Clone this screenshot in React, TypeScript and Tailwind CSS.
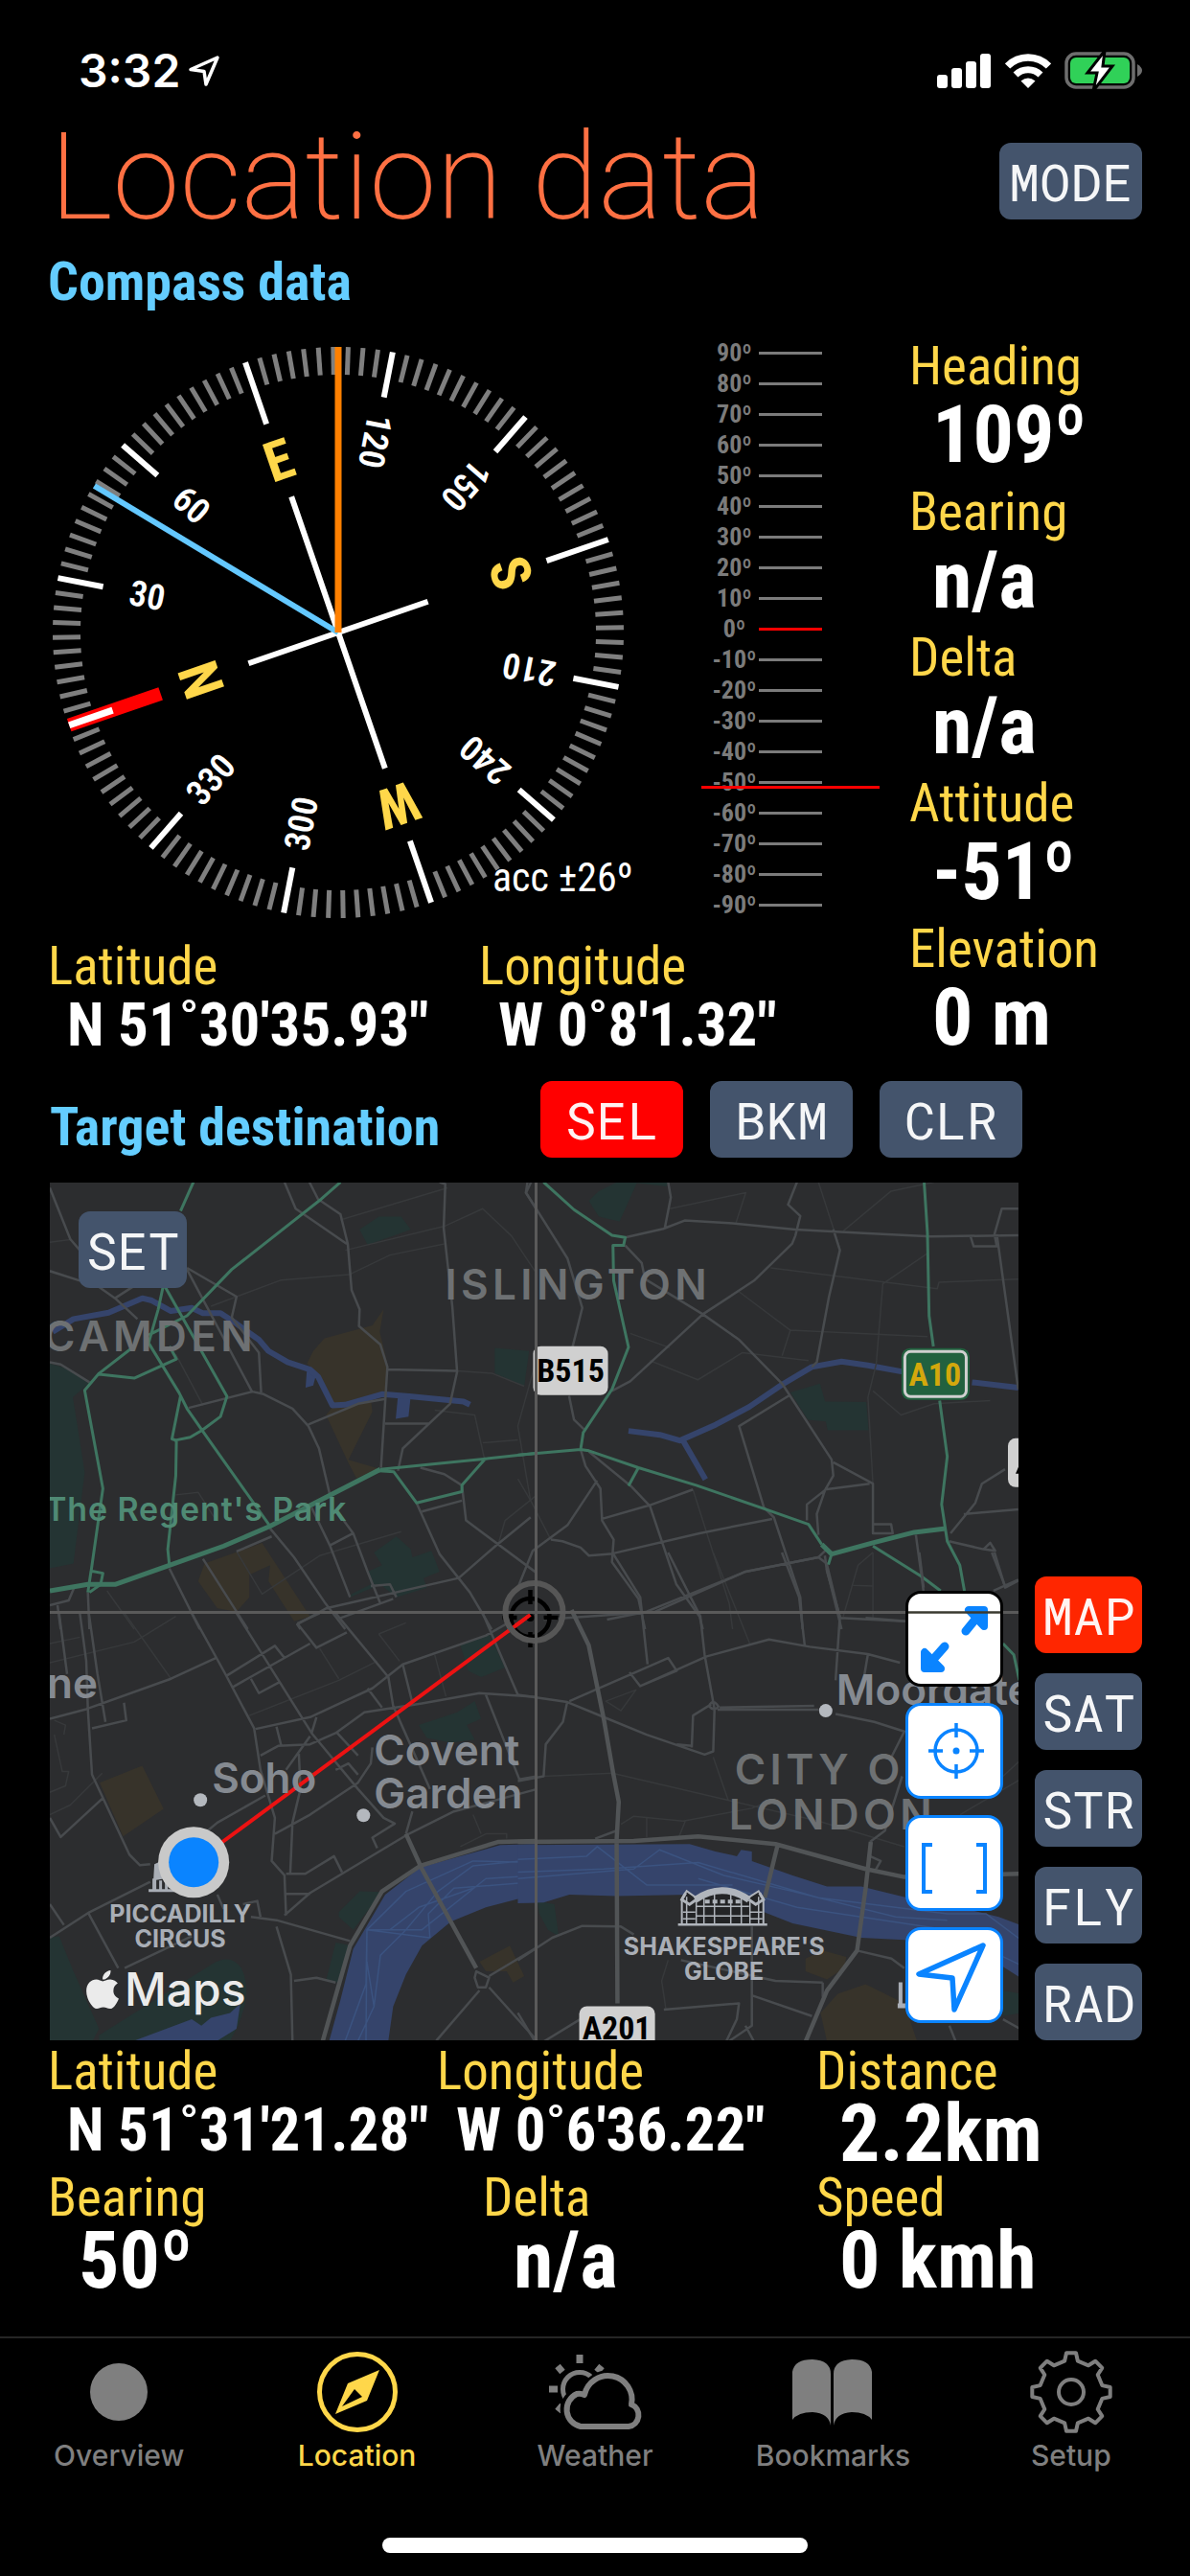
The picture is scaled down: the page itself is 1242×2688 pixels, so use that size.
import React from "react";
import { FaApple } from "react-icons/fa";

const COND = "font-['Roboto_Condensed',Roboto,'Liberation_Sans',sans-serif]";

/* ---------- status bar ---------- */

function StatusBar() {
  return (
    <div className="mt-[50px] flex h-12 items-center justify-between pl-[82px] pr-[50px]">
      <div className="flex items-center gap-2">
        <span className="text-[48px] leading-[48px] font-semibold">3:32</span>
        <svg width="34" height="34" viewBox="0 0 34 34" fill="none" stroke="white" strokeWidth="3.5" strokeLinejoin="round" aria-hidden="true">
          <path d="M31 3L3 15.500L17 17.500L19 31Z" />
        </svg>
      </div>
      <div className="flex items-center gap-[14px]">
        <svg width="57" height="36" viewBox="0 0 57 36" fill="white" role="img" aria-label="Signal">
          <rect x="0" y="22" width="11" height="14" rx="3" />
          <rect x="15" y="15" width="11" height="21" rx="3" />
          <rect x="30" y="8" width="11" height="28" rx="3" />
          <rect x="45" y="0" width="11" height="36" rx="3" />
        </svg>
        <svg width="48" height="36" viewBox="0 0 48 36" fill="none" stroke="white" role="img" aria-label="Wi-Fi">
          <path d="M2.500 13A30 30 0 0 1 45.500 13" strokeWidth="7.500" />
          <path d="M11 22A18.500 18.500 0 0 1 37 22" strokeWidth="7" />
          <path d="M24 36L16.500 28.500Q24 22.500 31.500 28.500Z" fill="white" stroke="none" />
        </svg>
        <svg width="81" height="40" viewBox="0 0 81 40" role="img" aria-label="Battery charging">
          <rect x="2" y="2" width="70" height="35" rx="10" fill="none" stroke="#6e6e6e" strokeWidth="3.500" />
          <path d="M76 13Q81 16 81 19.500Q81 23 76 26Z" fill="#6e6e6e" />
          <rect x="6" y="6" width="62" height="27" rx="6" fill="#30d158" />
          <path d="M42 -1L24 22H34L30 41L50 15H40Z" fill="white" stroke="black" strokeWidth="3" />
        </svg>
      </div>
    </div>
  );
}

/* ---------- shared pieces ---------- */

function PadButton({ label, tone = "slate", className = "" }: { label: string; tone?: "slate" | "red" | "orange"; className?: string }) {
  const bg = tone === "red" ? "bg-[#ff0000]" : tone === "orange" ? "bg-[#ff2600]" : "bg-[#44546c]";
  return (
    <button type="button" className={`h-20 shrink-0 rounded-xl font-['Roboto_Mono','Liberation_Mono',monospace] text-[54px] leading-[80px] text-white/95 ${bg} ${className}`}>
      {label}
    </button>
  );
}

function Label({ children }: { children: React.ReactNode }) {
  return <div className={`text-[55px] leading-[60px] whitespace-nowrap text-[#ffd74a] ${COND}`}>{children}</div>;
}

function Coord({ children }: { children: React.ReactNode }) {
  return <div className={`pl-5 text-[63px] leading-[64px] font-bold whitespace-nowrap ${COND}`}>{children}</div>;
}

function Value({ children, className = "pl-6 leading-[72px]" }: { children: React.ReactNode; className?: string }) {
  return <div className={`text-[84px] font-bold whitespace-nowrap ${COND} ${className}`}>{children}</div>;
}

/* ---------- compass ---------- */

const HEADING = 109;
const CARDINALS: Record<number, string> = { 0: "N", 90: "E", 180: "S", 270: "W" };

function Compass() {
  const marks = Array.from({ length: 120 }, (_, i) => i * 3);
  return (
    <svg viewBox="0 0 624 616" className="h-[616px] w-[624px]" role="img" aria-label="Compass, heading 109 degrees">
      <g transform="translate(303 308)">
        <g transform={`rotate(${-HEADING})`}>
          {marks.map((a) => {
            const cardinal = a % 90 === 0;
            const major = a % 30 === 0;
            if (a === 0) return null;
            return (
              <line key={a} y1={-298} y2={cardinal ? -230 : major ? -250 : -269} stroke={major ? "white" : "#7f7f7f"} strokeWidth={major ? 6 : 5} transform={`rotate(${a})`} />
            );
          })}
          <rect x="-7" y="-297" width="14" height="101" fill="#ff0000" />
          <rect x="-3.500" y="-297" width="7" height="48" fill="white" />
          <path d="M0 -99V99M-150 0H150" stroke="white" strokeWidth="6" />
          {marks.filter((a) => a % 30 === 0).map((a) =>
            CARDINALS[a] ? (
              <text key={a} transform={`rotate(${a}) translate(0 ${a === 0 ? -131 : -170})`} textAnchor="middle" className={`fill-[#ffd74a] text-[58px] font-bold ${COND}`}>
                {CARDINALS[a]}
              </text>
            ) : (
              <text key={a} transform={`rotate(${a}) translate(0 -203) rotate(90)`} y="13" textAnchor="middle" className={`fill-white text-[37px] font-semibold ${COND}`}>
                {a}
              </text>
            ),
          )}
        </g>
        <line y2="-297" stroke="#64c8ff" strokeWidth="6" transform="rotate(-59)" />
        <line y2="-298" stroke="#ff8000" strokeWidth="7" />
      </g>
      <text x="464" y="578" className={`fill-white text-[42px] ${COND}`}>acc ±26º</text>
    </svg>
  );
}

function AttitudeScale() {
  const steps = Array.from({ length: 19 }, (_, i) => 90 - i * 10);
  return (
    <div className="relative flex flex-col">
      {steps.map((s) => (
        <div key={s} className="flex h-8 items-center">
          <span className={`w-[60px] pl-[9px] text-center text-[26px] leading-8 font-bold text-[#7b7b7b] ${COND}`}>{s}º</span>
          <span className={`h-[3px] w-[66px] ${s === 0 ? "bg-[#ff0000]" : "bg-[#7b7b7b]"}`} />
        </div>
      ))}
      <span className="absolute top-[468px] left-0 h-[3px] w-[186px] bg-[#ff0000]" />
    </div>
  );
}

const READOUTS = [
  ["Heading", "109º"],
  ["Bearing", "n/a"],
  ["Delta", "n/a"],
  ["Attitude", "-51º"],
  ["Elevation", "0 m"],
];

/* ---------- map ---------- */

type Tile = { at: string; parks: string; sand: string; water?: string; canal?: string; wakes?: string; faint: string; roads: string; banks?: string; green?: string; trunk?: string };

const TILES: Tile[] = [
  {
    at: "translate(40 1220) scale(.33333)",
    parks: "M36 610L75 620L165 665L108 715L125 820L145 950L110 1235L36 1250ZM1005 190L1065 150L1135 150L1165 190L1030 238ZM1428 560L1535 570L1520 680L1428 640ZM1120 1150L1165 1190L1170 1215L1230 1195L1255 1260L1205 1280L1215 1310L1120 1340L1070 1300L975 1340L980 1330L1040 1300L1030 1260L1075 1240L1050 1200Z",
    sand: "M840 610L860 570L895 530L1045 490L1080 440L1068 510L1092 610L1085 700L1040 720L1045 760L970 910L1065 938L995 968L970 920L900 770L925 740L875 640ZM500 1290L520 1235L700 1170L850 1400L800 1415L720 1290L725 1240L660 1270L660 1340L620 1385L560 1375Z",
    canal: "M45 510L110 470L220 450L325 405L355 412L415 445L480 435L515 452L570 452L620 485L690 535L720 570L780 605L850 628L875 650L920 740L960 738L1075 705L1160 712L1330 728L1350 738",
    water: "M1125 710L1165 710L1158 775L1118 782ZM840 630L870 640L860 678L836 685Z",
    faint: "M945 160L1280 60M960 255L1270 180L1390 125L1480 210L1560 330M975 330L1100 270L1270 235M540 430L760 348L980 330M430 580L515 740M1310 632L1420 640L1520 680M1240 755L1365 770L1395 905M1560 590L1500 805L1540 1040M1135 1135L880 1210L700 1330L620 1197M215 1320L300 1440M430 1020L500 1012L550 1090M36 230L100 222M1390 857L1500 848M1440 1170L1460 1100L1560 1020",
    roads: "M36 60L100 220L130 255M36 320L130 350M190 370L240 405L310 470M240 405L310 360M465 310L620 400L605 465L690 575L697 700M465 315L670 700M470 748L670 697L705 705L795 750L845 805L878 875L912 1020M855 1060L912 1178L975 1340M845 800L1000 735L1085 720M770 42L805 125L965 235M848 42L875 95L945 142L968 235L980 380L1005 440L1003 492L1070 550L1092 620L1072 935M1092 628L1310 632M1255 42L1273 48L1268 185L1295 430L1310 635L1288 735L1140 875L1125 945M1085 797L1225 797M1195 935L1270 955L1325 990L1338 1100L1560 1265M1183 1045L1255 1205L1350 1325L1418 1440M1200 1072L1325 1038M410 1250L505 1440M515 1220L655 1440M725 1125L800 1215L895 1355L960 1440M955 1100L985 1140L1030 1260L1070 1360M912 1178L985 1140M620 1197L730 1150M820 1440L810 1425L900 1375L1315 1280L1430 1180L1540 1090M945 1405L1110 1345M1040 1305L1100 1300L1120 1340M36 605L70 612L160 668M155 1325L160 1440M60 1365L70 1440M36 1365L95 1350L112 1310M1530 42L1525 75L1560 130",
    green: "M485 42L445 132M945 42L885 95L605 315L465 460L345 520M390 370L375 440L345 545L440 700L465 750L510 815L725 1118M397 370L590 712L570 775L512 818L475 840L425 850M300 555L190 640L145 693L202 1000L165 1260M190 643L300 655L432 595L410 555M445 710L418 845L432 850L430 960L405 1190L410 1240M1065 945L1112 948L1183 1045L1325 1010L1325 990L1400 905M155 1325L165 1258L202 1265L195 1300L160 1325M1070 940L1400 907L1556 890",
    trunk: "M36 1320L155 1300L240 1300L410 1240L580 1180L725 1118L905 1025L1070 940",
  },
  {
    at: "translate(540 1220) scale(.3444 .33333)",
    parks: "M215 100L245 70L300 42L455 42L450 55L360 45L308 165L245 150ZM825 700L915 672L930 728L1055 730L1062 818L938 818L932 790L878 785Z",
    sand: "",
    canal: "M335 820L430 832L490 850L600 800L700 745L800 675L890 620L980 603L1060 615L1165 635M500 850L568 972M1375 668L1515 685",
    faint: "M460 125L690 75L660 170M985 195L1130 70L1260 42M1240 265L1105 360L1085 610L1060 715L1075 985M765 310L1270 375L1275 355L1515 345M670 385L825 505L800 585M825 505L1240 525M340 515L460 560M400 600L545 660L680 575L880 600M0 970L40 1040L100 1160M530 1003L640 1360L650 1440M1075 1200L1030 1240L985 1400M1075 1200L1075 1410M1015 1303L1075 1305M1075 695L1160 770L1260 735L1430 725M910 42L975 250",
    roads: "M325 215L440 188L505 162L640 170L840 190L1060 202L1250 212L1515 208M325 240L375 295L385 345L560 455L670 535L800 672L950 910L955 960L930 1005L905 1080L910 1145M845 42L818 112L855 148L840 210L830 235L715 350L560 455L340 665L285 695M955 190L975 255L942 400L905 605L890 620M455 42L463 90L445 185M820 710L670 805L745 1060L775 1090L855 1340L862 1440M955 918L1075 985L1075 1140L1135 1140L1130 1112L1075 1112M930 1003L1065 985M930 1005L875 1050L875 1100M190 878L205 930L250 1000L255 1100L290 1160L285 1230L365 1345L385 1440M215 885L345 995L400 1055L480 1300L550 1400L560 1440M240 975L150 1115L45 1195L0 1310M255 1095L400 1052L530 1003M100 1160L135 1165L190 1185L215 1210L280 1205L550 1140L770 1095M270 1410L390 1385L690 1260L910 1215L935 1190M910 1215L935 1235L975 1405L1170 1415M935 1250L980 1440M1205 1145L1228 1320M1310 1140L1385 1045L1405 985L1475 940M1350 1080L1515 1065M1305 1165L1410 1190L1430 1170L1445 1195L1410 1190M1435 1200L1475 1305M1440 1320L1515 1285M1515 125L1465 125L1443 205L1450 243L1380 243L1370 210M1450 205L1515 690M40 42L25 75L150 280L195 435L165 560M155 710L170 785L200 815",
    green: "M78 42L170 128L285 208L325 215L320 240L288 240L290 350L335 558L285 690L198 825L190 878L0 895M190 878L215 882L365 935L540 990L750 1065L880 1112L920 1175M365 935L335 992M950 1205L940 1238M1075 1180L1222 1275L1280 1320M1230 42L1240 200L1245 460L1258 556M1277 725L1300 900L1283 1050L1300 1165L1338 1240L1352 1320",
    trunk: "M920 1175L950 1205L1075 1170M1075 1170L1200 1137L1295 1125",
  },
  {
    at: "translate(40 1680) scale(.33333)",
    parks: "M36 1025L65 1020L110 1130L190 1310L170 1347L36 1347ZM190 1330L540 1110Q600 1070 635 1120Q660 1170 645 1240L625 1300L600 1347L190 1347ZM940 945L1005 880L1075 882L985 1000L940 960ZM930 1040L980 1050L935 1165L900 1160ZM1320 110L1410 75L1460 180L1385 210L1345 190ZM1190 360L1310 320L1365 285L1385 340L1340 360L1365 405L1290 415L1215 400Z",
    sand: "M192 540L325 487L392 622L265 708ZM1380 1100L1475 1050L1520 1145L1485 1165L1465 1130L1400 1130Z",
    water: "M910 1347L945 1220L985 1060L1085 890L1195 805L1445 735L1560 732L1560 915L1515 915L1515 900L1400 930L1290 975L1200 1050L1150 1140L1110 1240L1095 1347ZM300 1347L480 1280L510 1300L540 1275L600 1260L632 1230L620 1310L560 1347Z",
    wakes: "M1000 1347L1050 1240L1070 1080L1150 1000L1250 880L1360 800L1560 780M960 1347L1025 1170L1028 1000L1200 1000L1400 840L1560 830M1025 1347L1028 1000L1150 880L1360 785L1560 790M1225 1025L1220 950L1300 870L1560 850M1028 1000L1225 1025M1050 1240L1028 1100M1100 1000L1190 930L1360 870",
    banks: "M890 1347L975 1050L1075 880L1195 800L1440 725L1560 722M1150 700L1200 810L1370 1120",
    faint: "M270 10L415 215M36 105L130 85M36 165L300 100L430 20M50 390L75 505L95 505L85 550L36 570M36 640L100 610L200 510M660 330L940 220L1060 160M940 215L880 120M1065 75L1150 40M1065 75L1130 160M1240 140L1275 270M1320 740L1400 700L1465 700L1465 715M1360 640L1385 700M50 345L85 360L80 390",
    roads: "M65 10L90 200M130 10L150 160L155 310L168 515L285 765L318 798L350 795M158 10L185 200L210 350M36 340L150 310L415 215L555 150M168 370L275 345L268 290M480 10L585 200L675 370L695 500L740 650L730 785L770 830L775 955M620 10L855 385L1000 560L1080 650L1115 668L1045 712L1060 745M810 42L870 118L965 70M930 10L1095 210L1110 300L1150 390L1225 560M810 42L880 10M590 205L740 112L770 150M610 240L850 105M665 215L690 260L755 225M680 372L850 335L1045 245L1140 170L1400 80L1470 40M1140 170L1170 290M1030 245L1075 305M855 385L870 335M745 365L760 425M695 455L750 425L850 420L930 385L1020 320L1200 292L1380 260L1560 272M850 395L775 500M815 450L820 560L795 665L788 825M710 580L560 665L530 690M740 700L850 640L1000 540L1040 480L1045 430M935 385L1000 455M930 500L970 480L1000 515M1390 10L1500 265M1400 265L1505 530L1560 520M36 1025L160 945L350 850M155 945L250 1120M270 1120L480 1020M36 920L80 985M36 650L70 710L200 590M665 960L745 970L975 1035M745 990L790 1140L795 1347M770 955L850 885L1150 705L1300 630L1560 560M775 888L850 888M775 825L835 825L925 770L950 820M800 1160L870 1150L930 1165M1170 630L1150 700M1370 1130L1410 1150L1400 1180L1375 1180L1365 1150ZM1410 1145L1560 1055M1380 1190L1245 1347M1410 1180L1560 1347M560 890L580 935M640 920L685 910L695 960",
  },
  {
    at: "translate(540 1620) scale(.4477 .33333)",
    parks: "M45 1090L85 1100L95 1200L70 1180L50 1130ZM1130 1370L1170 1380L1170 1440L1130 1450Z",
    sand: "M670 1270L710 1245L765 1265L760 1300L720 1335L670 1310ZM705 1440L745 1380L810 1350L900 1410L930 1530L720 1530Z",
    water: "M0 915L400 912L460 935L510 950L520 930L545 935L545 965L640 1010L720 1045L800 1045L900 1078L1030 1110L1120 1140L1170 1165L1170 1330L1100 1270L1000 1225L900 1212L800 1205L640 1160L545 1110L400 1070L230 1075L120 1070L60 1095L0 1097Z",
    wakes: "M0 960L160 950L185 920L300 1040L500 1040M0 1020L270 990L330 930L480 1010L640 1060L880 1140L1000 1150M0 1000L200 990L420 970L700 1080L1000 1130L1090 1130L1170 1210M420 1020L650 1110L1000 1180L1170 1290",
    banks: "M0 905L270 902L420 888L600 912L810 990L900 1015L1170 1005M232 1410L230 900L235 780L222 690L200 520L165 290L125 180M605 915L575 1080M822 905L810 1050L790 1245L720 1370L670 1530",
    faint: "M455 0L540 285M60 700L220 690L490 775M240 850L270 825L385 840L545 800L600 770M490 775L455 640M490 775L700 840L900 920M300 830L300 890M390 840L375 890M350 1275L335 1340L345 1430M1030 820L1170 710M1130 700L1170 650M205 465L275 430L240 495Z",
    roads: "M0 445L115 468L200 515L300 570L435 632L455 622L458 490L435 320L425 200L350 0M115 468L105 530L65 600L60 700L0 715M120 465L350 330L370 370L285 418L260 375M285 418L440 325L585 272L680 295L815 318L890 345M470 485L690 480M465 492L700 492M405 610L408 510L450 475M370 600L405 605M715 10L720 60L750 200L740 400M60 210L320 185L530 60L700 15M220 0L285 140L302 350M615 0L655 140L668 290M740 505L830 530L900 560L870 640M180 895L230 870M815 320L800 440M0 1275L80 1205L150 1168L240 1170L270 1195M380 1275L600 1340L710 1345M790 1245L870 1270L900 1300M545 1170L545 1480L490 1530M545 1385L685 1450M710 1345L710 1390M340 1430L515 1410L510 1460L485 1530M530 1480L550 1530M935 0L945 110M1110 0L1135 110L1170 85M1130 1460L1170 1490M1005 1480L1020 1530M0 1440L40 1530M60 1530L145 1460M820 950L845 965L830 1000M810 205L905 215M895 700L855 870L820 905M445 480Q455 455 467 482Q457 500 445 480",
    green: "M1130 285L1155 320L1168 400",
  },
];

const CAPS = "font-['Inter',sans-serif] font-semibold text-[44px] tracking-widest fill-[#6e7173]";
const PLACE = "font-['Inter',sans-serif] font-semibold text-[44px] fill-[#858a91]";
const POI = "font-['Inter',sans-serif] font-bold text-[25px] fill-[#a9aeb6]";
const ROUTE = `${COND} font-bold text-[34px]`;

function MapCanvas() {
  return (
    <svg viewBox="52 1234 1010 895" preserveAspectRatio="xMidYMid slice" className="absolute inset-0 h-full w-full" role="img" aria-label="Map of central London">
      <rect x="52" y="1234" width="1010" height="895" fill="#2c2d2f" />
      {TILES.map((t) => (
        <g key={t.at} transform={t.at} fill="none" strokeLinejoin="round">
          <path d={t.parks} fill="#243433" />
          <path d={t.sand} fill="#37332a" />
          {t.water && <path d={t.water} fill="#35446b" />}
          {t.canal && <path d={t.canal} stroke="#35446b" strokeWidth="6" vectorEffect="non-scaling-stroke" />}
          {t.wakes && <path d={t.wakes} stroke="#3b5380" strokeWidth="1.500" vectorEffect="non-scaling-stroke" />}
          <path d={t.faint} stroke="#37393b" strokeWidth="1.500" vectorEffect="non-scaling-stroke" />
          <path d={t.roads} stroke="#484b4e" strokeWidth="2.500" vectorEffect="non-scaling-stroke" />
          {t.banks && <path d={t.banks} stroke="#515456" strokeWidth="4.500" vectorEffect="non-scaling-stroke" />}
          {t.green && <path d={t.green} stroke="#3e7560" strokeWidth="3" vectorEffect="non-scaling-stroke" />}
          {t.trunk && <path d={t.trunk} stroke="#3e7560" strokeWidth="5" vectorEffect="non-scaling-stroke" />}
        </g>
      ))}

      {/* bearing line from the user's position to the target */}
      <line x1="553" y1="1685" x2="210" y2="1938" stroke="#ec1212" strokeWidth="4" />

      <text x="464" y="1356" className={CAPS}>ISLINGTON</text>
      <text x="268" y="1410" textAnchor="end" className={CAPS}>CAMDEN</text>
      <text x="362" y="1587" textAnchor="end" className="fill-[#4f8a74] font-['Inter',sans-serif] text-[34px] font-semibold tracking-wide">The Regent's Park</text>
      <text x="102" y="1772" textAnchor="end" className={PLACE}>ne</text>
      <text x="221" y="1871" className={PLACE}>Soho</text>
      <text x="390" y="1842" className={PLACE}>Covent</text>
      <text x="390" y="1887" className={PLACE}>Garden</text>
      <text x="872" y="1779" className={PLACE}>Moorgate</text>
      <text x="766" y="1862" className={CAPS}>CITY OF</text>
      <text x="760" y="1909" className={CAPS}>LONDON</text>
      <text x="188" y="2006" textAnchor="middle" className={POI}>PICCADILLY</text>
      <text x="188" y="2032" textAnchor="middle" className={POI}>CIRCUS</text>
      <text x="755" y="2040" textAnchor="middle" className={POI}>SHAKESPEARE'S</text>
      <text x="755" y="2066" textAnchor="middle" className={POI}>GLOBE</text>
      <g fill="#b4b8be">
        <circle cx="209" cy="1878" r="7" />
        <circle cx="379" cy="1894" r="7" />
        <circle cx="861" cy="1785" r="7" />
      </g>

      {/* theatre symbol */}
      <g transform="translate(707 1967)" fill="none" stroke="#b0b5bc" strokeWidth="2">
        <path d="M4 41V14L9 6L19 13Q46 -6 73 13L84 6L89 14V41" fill="#232426" />
        <path d="M18 15Q46 -4 74 15" strokeWidth="7" />
        <path d="M9 12V41M19 15V41M27 13V41M38 9V41M55 9V41M66 13V41M75 15V41M84 12V41M5 28H18M75 28H88M19 22H74M19 32H74M5 35H18M75 35H88" strokeWidth="1.500" />
        <path d="M8 8L4 15L12 20L19 15M85 8L89 15L81 20L74 15" strokeWidth="3" />
        <path d="M28 17H66" strokeDasharray="5 3" strokeWidth="4" />
        <path d="M0 41H93" strokeWidth="2.500" />
      </g>

      {/* monument symbol behind the position marker */}
      <g fill="#a9aeb6">
        <path d="M161 1945L172 1940V1960L160 1962ZM155 1971H182V1974H155Z" />
        <path d="M159 1960H163V1972H159ZM166 1962H169V1972H166ZM172 1962H175V1972H172Z" />
        <path d="M937 2068H941V2090H944V2095H936V2090H937Z" />
      </g>

      {/* road shields */}
      <rect x="556" y="1405" width="78" height="51" rx="8" fill="#d0d0d0" />
      <text x="595" y="1442" textAnchor="middle" className={`${ROUTE} fill-black`}>B515</text>
      <rect x="940" y="1407" width="71" height="54" rx="9" fill="#22613f" />
      <rect x="943.500" y="1410.500" width="64" height="47" rx="6" fill="none" stroke="#d0d0d0" strokeWidth="3" />
      <text x="975" y="1446" textAnchor="middle" className={`${ROUTE} fill-[#d3a80c]`}>A10</text>
      <rect x="1051" y="1501" width="40" height="51" rx="8" fill="#d0d0d0" />
      <path d="M1062 1531L1059 1538H1062Z" fill="black" />
      <rect x="604" y="2093" width="79" height="50" rx="8" fill="#d0d0d0" />
      <text x="643" y="2128" textAnchor="middle" className={`${ROUTE} fill-black`}>A201</text>

      {/* target reticle */}
      <g fill="none">
        <g stroke="black" strokeWidth="4.500">
          <circle cx="553" cy="1688" r="20" />
          <path d="M553 1659V1674M553 1703V1719M524 1688H539M567 1688H582" />
        </g>
        <circle cx="553" cy="1688" r="4" fill="black" />
        <line x1="553" y1="1685" x2="530" y2="1702" stroke="#ec1212" strokeWidth="4" />
        <circle cx="557" cy="1682" r="30" stroke="#565656" strokeWidth="6" />
        <path d="M559 1234V2129M52 1682.500H1062" stroke="#5a5a5a" strokeWidth="3" />
      </g>

      {/* position marker */}
      <circle cx="202" cy="1943" r="37" fill="#c9c9c9" />
      <circle cx="202" cy="1943" r="26" fill="#0a84ff" />
    </svg>
  );
}

function MapTool({ label, dark = false, children }: { label: string; dark?: boolean; children: React.ReactNode }) {
  return (
    <button type="button" aria-label={label} className={`h-[100px] w-[102px] overflow-hidden rounded-2xl border-[3px] bg-white ${dark ? "border-black" : "border-[#0a84ff]"}`}>
      <svg viewBox="3 3 96 94" className="h-full w-full" fill="none" stroke="#0a84ff" aria-hidden="true">
        {children}
      </svg>
    </button>
  );
}

function MapPanel() {
  return (
    <div className="relative h-[895px] flex-1 overflow-hidden">
      <MapCanvas />
      <PadButton label="SET" className="absolute top-[30px] left-[30px] w-[113px]" />
      <div className="absolute bottom-[27px] left-8 flex items-center text-[#ebebeb]">
        <FaApple className="size-[46px]" aria-hidden="true" />
        <span className="text-[48px] leading-[52px] font-medium">Maps</span>
      </div>
      <div className="absolute top-[426px] right-4 flex flex-col gap-[17px]">
        <MapTool label="Expand map" dark>
          <path d="M66 20H82V37ZM20 64V81H37Z" fill="#0a84ff" strokeWidth="8" strokeLinejoin="round" />
          <path d="M76 26L63 42M26 75L41 58" strokeWidth="9" strokeLinecap="round" />
          <path d="M0 22.500H102" stroke="#3a3a30" strokeWidth="2.500" />
        </MapTool>
        <MapTool label="Centre on target">
          <circle cx="53" cy="50" r="22" strokeWidth="3.500" />
          <path d="M53 21V36M53 64V79M24 50H39M67 50H82" strokeWidth="3.500" />
          <circle cx="53" cy="50" r="3.500" fill="#0a84ff" stroke="none" />
        </MapTool>
        <MapTool label="Fit both positions">
          <path d="M28 31H19V80H28M74 31H83V80H74" strokeWidth="4" />
        </MapTool>
        <MapTool label="Go to my position">
          <path d="M81 19L14 49L49 53L51 86Z" strokeWidth="5.500" strokeLinejoin="round" />
        </MapTool>
      </div>
    </div>
  );
}

/* ---------- tab bar ---------- */

function gearPath() {
  const pts: string[] = [];
  for (let k = 0; k < 8; k++) {
    for (const [off, r] of [[-7, 41], [7, 41], [12, 33], [33, 33]]) {
      const a = ((k * 45 + off) * Math.PI) / 180;
      pts.push(`${(48 + r * Math.sin(a)).toFixed(1)} ${(48 - r * Math.cos(a)).toFixed(1)}`);
    }
  }
  return `M${pts.join("L")}Z`;
}

const TABS = [
  { name: "Overview", icon: <circle cx="48" cy="48" r="30" fill="currentColor" /> },
  {
    name: "Location",
    icon: (
      <>
        <circle cx="48" cy="48" r="39.500" fill="none" stroke="currentColor" strokeWidth="5" />
        <path fillRule="evenodd" d="M71 25L38 39L25 71L58 57ZM45 45L53 53L32 63Z" fill="currentColor" />
      </>
    ),
  },
  {
    name: "Weather",
    icon: (
      <g fill="none" stroke="currentColor" strokeWidth="5">
        <circle cx="32" cy="45" r="17.500" />
        <path d="M32 9V18M9 21L14 27M55 21L50 27M0 45H9M9 68L14 62" strokeWidth="7" />
        <path d="M33 84A18 18 0 0 1 29 49Q33 48 37 50A25 25 0 0 1 86 61A12 12 0 0 1 83 84Z" fill="black" stroke="black" strokeWidth="10" />
        <path d="M33 84A18 18 0 0 1 29 50Q33 49 37 51A25 25 0 0 1 86 61A12 12 0 0 1 83 84Z" strokeWidth="6" strokeLinejoin="round" />
      </g>
    ),
  },
  {
    name: "Bookmarks",
    icon: <path d="M6 77V27Q8 14 27 14Q46 15 46 29V83Q44 70 27 69Q12 69 6 77ZM89 77V27Q87 14 68 14Q49 15 49 29V83Q51 70 68 69Q83 69 89 77Z" fill="currentColor" />,
  },
  {
    name: "Setup",
    icon: (
      <g fill="none" stroke="currentColor" strokeWidth="4" strokeLinejoin="round">
        <path d={gearPath()} />
        <circle cx="48" cy="48" r="13" />
      </g>
    ),
  },
];

function TabBar() {
  return (
    <nav className="mt-auto border-t-2 border-[#262626] pt-2">
      <div className="grid grid-cols-5">
        {TABS.map((t) => (
          <button key={t.name} type="button" className={`flex flex-col items-center ${t.name === "Location" ? "text-[#ffd74a]" : "text-[#7f7f7f]"}`}>
            <svg viewBox="0 0 96 96" className="size-24 overflow-visible" aria-hidden="true">{t.icon}</svg>
            <span className="text-[30px] leading-9 font-medium">{t.name}</span>
          </button>
        ))}
      </div>
      <div className="mx-auto mt-[68px] mb-6 h-4 w-[444px] rounded-full bg-white" />
    </nav>
  );
}

/* ---------- screen ---------- */

export default function App() {
  return (
    <div className="flex min-h-screen flex-col overflow-hidden bg-black font-['Inter',sans-serif] text-white">
      <StatusBar />
      <main className="px-[50px]">
        <header className="mt-[43px] flex items-end justify-between">
          <h1 className="pl-0.5 font-['Roboto','Liberation_Sans',sans-serif] text-[126px] leading-[88px] font-extralight whitespace-nowrap text-[#ff7043]">Location data</h1>
          <PadButton label="MODE" className="w-[149px]" />
        </header>

        <h2 className={`mt-[33px] text-[56px] leading-[64px] font-bold text-[#64cdff] ${COND}`}>Compass data</h2>

        <section className="mt-[26px] grid grid-cols-[minmax(0,1fr)_217px_243px]">
          <div>
            <Compass />
            <div className="mt-[10px] flex">
              <div className="w-[450px] shrink-0">
                <Label>Latitude</Label>
                <Coord>N 51˚30'35.93"</Coord>
              </div>
              <div>
                <Label>Longitude</Label>
                <Coord>W 0˚8'1.32"</Coord>
              </div>
            </div>
          </div>
          <AttitudeScale />
          <div className="flex flex-col gap-2">
            {READOUTS.map(([k, v]) => (
              <div key={k}>
                <Label>{k}</Label>
                <Value className="pl-6 leading-[84px]">{v}</Value>
              </div>
            ))}
          </div>
        </section>

        <section className="mt-6">
          <div className="flex items-end gap-7">
            <h2 className={`w-[486px] pl-0.5 text-[56px] leading-[64px] font-bold whitespace-nowrap text-[#64cdff] ${COND}`}>Target destination</h2>
            <PadButton label="SEL" tone="red" className="w-[149px]" />
            <PadButton label="BKM" className="w-[149px]" />
            <PadButton label="CLR" className="w-[149px]" />
          </div>
          <div className="mt-[26px] flex gap-[17px] pl-0.5">
            <MapPanel />
            <div className="flex w-28 flex-col justify-end gap-[21px]">
              <PadButton label="MAP" tone="orange" />
              <PadButton label="SAT" />
              <PadButton label="STR" />
              <PadButton label="FLY" />
              <PadButton label="RAD" />
            </div>
          </div>
        </section>

        <section className="mt-0.5 grid grid-cols-[406px_396px_1fr]">
          <div className="h-[132px]">
            <Label>Latitude</Label>
            <Coord>N 51˚31'21.28"</Coord>
          </div>
          <div>
            <Label>Longitude</Label>
            <Coord>W 0˚6'36.22"</Coord>
          </div>
          <div>
            <Label>Distance</Label>
            <Value>2.2km</Value>
          </div>
          <div>
            <Label>Bearing</Label>
            <Value className="pl-8 leading-[72px]">50º</Value>
          </div>
          <div className="pl-12">
            <Label>Delta</Label>
            <Value className="pl-8 leading-[72px]">n/a</Value>
          </div>
          <div>
            <Label>Speed</Label>
            <Value>0 kmh</Value>
          </div>
        </section>
      </main>
      <TabBar />
    </div>
  );
}
